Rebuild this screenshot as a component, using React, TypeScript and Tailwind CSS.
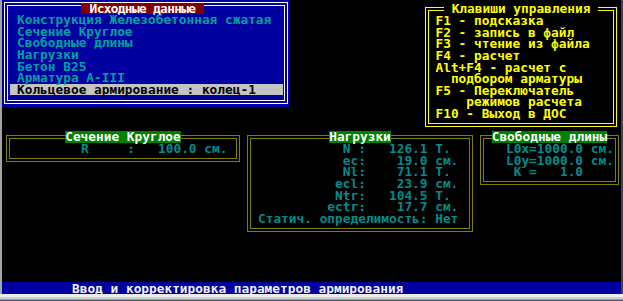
import type { ReactNode } from 'react'

type FrameProps = {
  className: string
  lineClass: string
  innerClass?: string
  title: string
  titleClass: string
  children: ReactNode
}

// double-line box like the DOS ═══ frames, title sits on the top edge
function Frame({ className, lineClass, innerClass = '', title, titleClass, children }: FrameProps) {
  return (
    <div className={`relative shrink-0 border p-[2px] ${lineClass} ${className}`}>
      <div className={`h-full border ${lineClass} ${innerClass}`}>{children}</div>
      <div className="absolute left-0 right-0 top-[-4.6px] flex justify-center">
        <span className={`whitespace-pre leading-[11.64px] ${titleClass}`}>{title}</span>
      </div>
    </div>
  )
}

const menu = [
  'Конструкция Железобетонная сжатая',
  'Сечение Круглое',
  'Свободные длины',
  'Нагрузки',
  'Бетон В25',
  'Арматура A-III',
]

const keys = [
  'F1 - подсказка',
  'F2 - запись в файл',
  'F3 - чтение из файла',
  'F4 - расчет',
  'Alt+F4 - расчет с',
  '  подбором арматуры',
  'F5 - Переключатель',
  '    режимов расчета',
  'F10 - Выход в ДОС',
]

const loads = [
  '           N :   126.1 Т.',
  '           ec:    19.0 см.',
  '           Nl:    71.1 Т.',
  '          ecl:    23.9 см.',
  '          Ntr:   104.5 Т.',
  '         ectr:    17.7 см.',
  'Статич. определимость: Нет',
]

const lengths = ['L0x=1000.0 см.', 'L0y=1000.0 см.', ' К =   1.0']

export default function App() {
  return (
    <div className="w-[623px] h-[301px] flex flex-col overflow-hidden bg-[#a0a0a0] font-['DejaVu_Sans_Mono',monospace] font-bold text-[12.8px] leading-[11.64px]">
      <div className="flex h-[294px]">
        <div className="w-[2px] bg-[#a4a4a4]" />
        <div className="w-[619px] bg-black flex flex-col">
          {/* top: input data menu + keys help */}
          <div className="flex items-start h-[129px]">
            <div className="w-[288px] h-[107px] bg-[#0000a0] pt-[2px] pl-[2px] pr-[2px] pb-[3px]">
              <div className="relative h-full border border-white p-[2px]">
                <div className="h-full border border-white pt-[8px]">
                  {menu.map((m) => (
                    <div key={m} className="whitespace-pre pl-[9px] text-[#00a0a0]">
                      {m}
                    </div>
                  ))}
                  <div className="ml-[2px] mr-[1px] bg-[#c4c4c4] pl-[7px] whitespace-pre text-black">
                    Кольцевое армирование : колец-1
                  </div>
                </div>
                <div className="absolute top-0 left-[76px] w-[123px] h-[11px] bg-[#800000] text-center text-white tracking-[-0.65px] leading-[11px]">
                  Исходные данные
                </div>
              </div>
            </div>

            <Frame
              className="ml-[135px] mt-[7px] w-[192px] h-[120px]"
              lineClass="border-[#ffff00]"
              innerClass="pt-[4px] pl-[6.5px]"
              title=" Клавиши управления "
              titleClass="bg-black text-[#ffff00]"
            >
              {keys.map((k) => (
                <div key={k} className="whitespace-pre text-[#ffff00]">
                  {k}
                </div>
              ))}
            </Frame>
          </div>

          {/* middle: section, loads, free lengths */}
          <div className="flex items-start pt-[6px]">
            <Frame
              className="ml-[4px] w-[234px] h-[27px]"
              lineClass="border-[#808000]"
              innerClass="pt-[4px] pl-[71px]"
              title="Сечение Круглое"
              titleClass="bg-[#008000] text-white"
            >
              <div className="whitespace-pre text-[#008c8c]">R     :   100.0 см.</div>
            </Frame>

            <Frame
              className="ml-[7px] w-[226px] h-[97px]"
              lineClass="border-[#808000]"
              innerClass="pt-[4px] pl-[7px]"
              title="Нагрузки"
              titleClass="bg-[#008000] text-white"
            >
              {loads.map((l) => (
                <div key={l} className="whitespace-pre text-[#008c8c]">
                  {l}
                </div>
              ))}
            </Frame>

            <Frame
              className="ml-[7px] w-[139px] h-[50px]"
              lineClass="border-[#808000]"
              innerClass="pt-[4px] pl-[22px]"
              title="Свободные длины"
              titleClass="bg-[#008000] text-white"
            >
              {lengths.map((l) => (
                <div key={l} className="whitespace-pre text-[#008c8c]">
                  {l}
                </div>
              ))}
            </Frame>
          </div>

          <div className="flex-1" />

          <div className="h-[11.64px] bg-[#0000a0] pl-[70px] pt-[1px] whitespace-pre text-[#f4f4f4]">
            Ввод и корректировка параметров армирования
          </div>
        </div>
        <div className="w-[2px] bg-[#3a4658]" />
      </div>
      <div className="h-[3px] bg-[#ececec]" />
      <div className="h-[2px] bg-[#cfcfcf]" />
      <div className="h-[1px] bg-[#9c9c9c]" />
      <div className="h-[1px] bg-[#4c5a6e]" />
    </div>
  )
}
